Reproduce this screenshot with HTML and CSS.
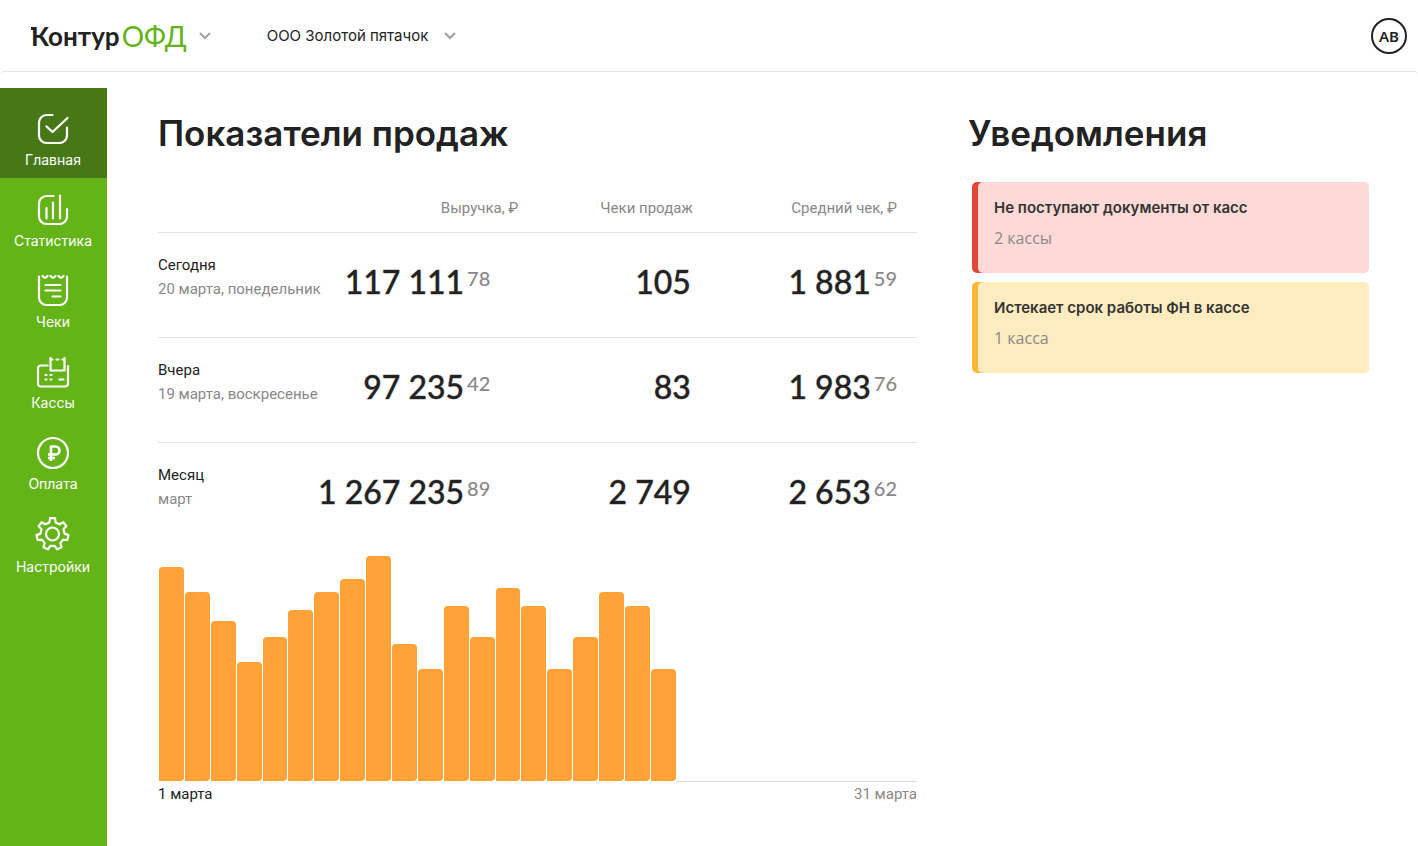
FILE: index.html
```html
<!DOCTYPE html>
<html lang="ru">
<head>
<meta charset="utf-8">
<meta name="viewport" content="width=device-width, initial-scale=1">
<title>Контур ОФД</title>
<link rel="stylesheet" href="styles.css">
</head>
<body>
<header class="header">
  <button class="logo" type="button">
    <span class="logo-brand">Контур</span><span class="logo-product">ОФД</span>
    <svg class="chevron" width="12" height="8" viewBox="0 0 12 8" aria-hidden="true"><path d="M1 1l5 5 5-5"/></svg>
  </button>
  <button class="company" type="button">
    <span>ООО Золотой пятачок</span>
    <svg class="chevron" width="12" height="8" viewBox="0 0 12 8" aria-hidden="true"><path d="M1 1l5 5 5-5"/></svg>
  </button>
  <button class="avatar" type="button">АВ</button>
</header>
<div class="body">
  <nav class="sidebar">
    <a class="nav-item nav-item-active" href="#">
      <svg class="nav-icon" viewBox="0.5 0.5 32 32" aria-hidden="true"><path d="M16 2.500H10A7.500 7.500 0 0 0 2.500 10v13A7.500 7.500 0 0 0 10 30.500h13a7.500 7.500 0 0 0 7.500-7.500V15"/><path d="M10 14l6 5.500L31 5.500"/></svg>
      <span>Главная</span>
    </a>
    <a class="nav-item" href="#">
      <svg class="nav-icon" viewBox="0.5 0.5 32 32" aria-hidden="true"><path d="M17 2.500H10A7.500 7.500 0 0 0 2.500 10v13A7.500 7.500 0 0 0 10 30.500h13a7.500 7.500 0 0 0 7.500-7.500V15.500"/><path d="M10 14.500V25M16.500 9v16M23.500 2v23"/></svg>
      <span>Статистика</span>
    </a>
    <a class="nav-item" href="#">
      <svg class="nav-icon" viewBox="0.5 0.5 32 32" aria-hidden="true"><path d="M2.500 2v21A7.500 7.500 0 0 0 10 30.500h13a7.500 7.500 0 0 0 7.500-7.500V2"/><path d="M6 1.500a2.800 2.800 0 0 0 5 0M14 1.500a2.800 2.800 0 0 0 5 0M22 1.500a2.800 2.800 0 0 0 5 0M9 10.500h15M9 16h15M16 22h8"/></svg>
      <span>Чеки</span>
    </a>
    <a class="nav-item" href="#">
      <svg class="nav-icon" viewBox="0.5 0 32 32" aria-hidden="true"><path d="M11 9.500H4.500A3 3 0 0 0 1.500 12.500v15a3 3 0 0 0 3 3h24a3 3 0 0 0 3-3V10"/><path d="M14 2v12.500h14V2"/><path d="M14 3.500h2M20 3.500h2M26 3.500h2"/><path d="M9 19h1M14 19h1M9 23.500h1M14 23.500h1M23 23.500h4"/></svg>
      <span>Кассы</span>
    </a>
    <a class="nav-item" href="#">
      <svg class="nav-icon" viewBox="0.5 0 32 32" aria-hidden="true"><circle cx="16.500" cy="16" r="15"/><path d="M14.500 24V9.500h4.500a4 4 0 0 1 0 8H11.500M11.500 21h7" class="nav-icon-bold"/></svg>
      <span>Оплата</span>
    </a>
    <a class="nav-item" href="#">
      <svg class="nav-icon nav-icon-large" viewBox="0.5 1 34 34" aria-hidden="true"><path d="M14.500 1.200h5l.6 4.200 4 1.900 3.700-2.100 3.100 3.900-2.900 3.100 1 4.400 4 1.500-1.200 4.900-4.200-.4-2.800 3.500 1.300 4.100-4.500 2.100-2.400-3.500h-4.400l-2.400 3.500-4.500-2.100 1.300-4.100-2.800-3.500-4.200.4L1 18.100l4-1.500 1-4.400-2.900-3.100 3.100-3.900 3.700 2.100 4-1.900z"/><circle cx="17" cy="17" r="6.500"/></svg>
      <span>Настройки</span>
    </a>
  </nav>
  <main class="content">
    <section class="sales">
      <h1 class="title">Показатели продаж</h1>
      <table class="table">
        <colgroup><col class="col-period"><col class="col-revenue"><col class="col-receipts"><col class="col-average"></colgroup>
        <thead>
          <tr><td></td><th scope="col">Выручка, ₽</th><th scope="col">Чеки продаж</th><th class="average-head" scope="col">Средний чек, ₽</th></tr>
        </thead>
        <tbody>
          <tr>
            <th scope="row">Сегодня<span class="date">20 марта, понедельник</span></th>
            <td class="revenue">117 111<span class="kopecks">78</span></td>
            <td class="receipts">105</td>
            <td class="average">1 881<span class="kopecks">59</span></td>
          </tr>
          <tr>
            <th scope="row">Вчера<span class="date">19 марта, воскресенье</span></th>
            <td class="revenue">97 235<span class="kopecks">42</span></td>
            <td class="receipts">83</td>
            <td class="average">1 983<span class="kopecks">76</span></td>
          </tr>
          <tr>
            <th scope="row">Месяц<span class="date">март</span></th>
            <td class="revenue">1 267 235<span class="kopecks">89</span></td>
            <td class="receipts">2 749</td>
            <td class="average">2 653<span class="kopecks">62</span></td>
          </tr>
        </tbody>
      </table>
      <div class="chart">
        <div class="bars">
          <div class="bar" style="height:95%"></div>
          <div class="bar" style="height:84%"></div>
          <div class="bar" style="height:71%"></div>
          <div class="bar" style="height:53%"></div>
          <div class="bar" style="height:64%"></div>
          <div class="bar" style="height:76%"></div>
          <div class="bar" style="height:84%"></div>
          <div class="bar" style="height:90%"></div>
          <div class="bar" style="height:100%"></div>
          <div class="bar" style="height:61%"></div>
          <div class="bar" style="height:50%"></div>
          <div class="bar" style="height:78%"></div>
          <div class="bar" style="height:64%"></div>
          <div class="bar" style="height:86%"></div>
          <div class="bar" style="height:78%"></div>
          <div class="bar" style="height:50%"></div>
          <div class="bar" style="height:64%"></div>
          <div class="bar" style="height:84%"></div>
          <div class="bar" style="height:78%"></div>
          <div class="bar" style="height:50%"></div>
        </div>
        <div class="axis"></div>
      </div>
      <div class="range"><span>1 марта</span><span class="range-end">31 марта</span></div>
    </section>
    <section class="notices">
      <h2 class="title">Уведомления</h2>
      <ul class="notice-list">
        <li class="notice notice-error">
          <div class="notice-body">
            <h3 class="notice-title">Не поступают документы от касс</h3>
            <p class="notice-text">2 кассы</p>
          </div>
        </li>
        <li class="notice notice-warning">
          <div class="notice-body">
            <h3 class="notice-title">Истекает срок работы ФН в кассе</h3>
            <p class="notice-text">1 касса</p>
          </div>
        </li>
      </ul>
    </section>
  </main>
</div>
</body>
</html>
```

FILE: styles.css
```css
* {
  box-sizing: border-box;
}

body {
  margin: 0;
  min-height: 100vh;
  display: flex;
  flex-direction: column;
  background: #fff;
  color: #222;
  font: 15px/24px Roboto, "Open Sans", sans-serif;
}

button {
  padding: 0;
  border: 0;
  background: none;
  color: inherit;
  font: inherit;
  cursor: pointer;
}

.header {
  display: flex;
  align-items: center;
  height: 71px;
  padding: 0 11px 0 31px;
}

.logo {
  position: relative;
  display: flex;
  align-items: center;
  font: 26px/32px Lato, sans-serif;
}

.logo::before {
  content: "";
  position: absolute;
  top: 7px;
  left: 0;
  width: 4px;
  height: 3px;
  background: #222;
}

.logo-brand {
  font-weight: 700;
}

.logo-product {
  margin-left: 2px;
  color: #64b418;
  font-size: 28px;
}

.chevron {
  margin-left: 12px;
  fill: none;
  stroke: #a0a0a0;
  stroke-width: 2;
}

.company {
  display: flex;
  align-items: center;
  margin-left: 56px;
  font: 15px/24px Inter, sans-serif;
}

.company .chevron {
  margin-left: 16px;
}

.avatar {
  width: 36px;
  height: 36px;
  margin-left: auto;
  border: 2px solid #222;
  border-radius: 50%;
  font: 600 15px/24px "Noto Sans", sans-serif;
}

.body {
  flex: 1;
  display: flex;
  padding-top: 16px;
  border-top: 1px solid #e4e4e4;
  border-radius: 4px 4px 0 0;
}

.sidebar {
  flex: none;
  width: 107px;
  background: #64b418;
}

.nav-item {
  display: flex;
  flex-direction: column;
  align-items: center;
  gap: 6px;
  padding: 16px 1px 9px 0;
  color: #fff;
  font: 14px/18px Inter, sans-serif;
  text-decoration: none;
}

.nav-item-active {
  padding-top: 25px;
  background: #467818;
}

.nav-icon {
  width: 32px;
  height: 32px;
  overflow: visible;
  fill: none;
  stroke: #fff;
  stroke-width: 2.2;
  stroke-linecap: round;
  stroke-linejoin: round;
}

.nav-icon-large {
  width: 34px;
  height: 34px;
}

.nav-icon-bold {
  stroke-width: 2.6;
  stroke-linecap: butt;
}

.content {
  flex: 1;
  display: grid;
  grid-template-columns: minmax(0, 1fr) 401px;
  gap: 51px;
  padding: 21px 49px 24px 51px;
}

.title {
  margin: 0;
  font: 600 35px/48px Inter, sans-serif;
}

.table {
  width: 100%;
  margin-top: 27px;
  border-collapse: collapse;
  table-layout: fixed;
}

.table td,
.table th {
  padding: 0;
  font-weight: 400;
  white-space: nowrap;
}

.col-period {
  width: 21%;
}

.col-revenue {
  width: 27%;
}

.col-receipts {
  width: 23%;
}

.col-average {
  width: 29%;
}

.table thead th {
  height: 48px;
  padding-right: 4px;
  color: #888;
  text-align: right;
}

.table thead .average-head {
  padding-right: 20px;
}

.table tbody tr {
  height: 105px;
  border-top: 1px solid #e4e4e4;
}

.table tbody th {
  padding-top: 20px;
  text-align: left;
  vertical-align: top;
}

.date {
  display: block;
  color: #888;
}

.table tbody td {
  padding-bottom: 6px;
  font: 500 32px/40px Lato, sans-serif;
  text-align: right;
  -webkit-text-stroke: 1px rgba(34, 34, 34, 0.4);
}

.table tbody .revenue {
  padding-right: 32px;
}

.table tbody .receipts {
  padding-right: 6px;
}

.table tbody .average {
  padding-right: 20px;
}

.kopecks {
  margin-left: 3px;
  color: #888;
  font-size: 20px;
  line-height: 20px;
  vertical-align: 8px;
  -webkit-text-stroke: 0;
}

.chart {
  display: flex;
  height: 226px;
  margin-top: 9px;
}

.bars {
  flex: 15 0 0;
  display: flex;
  align-items: flex-end;
  gap: 1px;
  padding: 0 0 1px 1px;
}

.bar {
  flex: 1;
  border-radius: 4px 4px 4px 0;
  background: #ffa237;
}

.axis {
  flex: 7 0 0;
  border-bottom: 1px solid #dcdcdc;
}

.range {
  display: flex;
  justify-content: space-between;
}

.range-end {
  color: #888;
}

.notice-list {
  display: grid;
  gap: 9px;
  margin: 25px 0 0 4px;
  padding: 0;
  list-style: none;
}

.notice {
  padding-left: 6px;
  border-radius: 5px;
}

.notice-error {
  background: linear-gradient(to right, #e14638 12px, #ffdad6 12px);
}

.notice-warning {
  background: linear-gradient(to right, #ffb637 12px, #ffecc0 12px);
}

.notice-body {
  padding: 14px 16px 23px;
  border-radius: 5px;
}

.notice-error .notice-body {
  background: #ffdad6;
}

.notice-warning .notice-body {
  background: #ffecc0;
}

.notice-title {
  margin: 0;
  color: #333;
  font: 600 15px/24px Inter, sans-serif;
}

.notice-text {
  margin: 6px 0 0;
  color: #888;
  font: 16px/24px "Open Sans", sans-serif;
}
```
